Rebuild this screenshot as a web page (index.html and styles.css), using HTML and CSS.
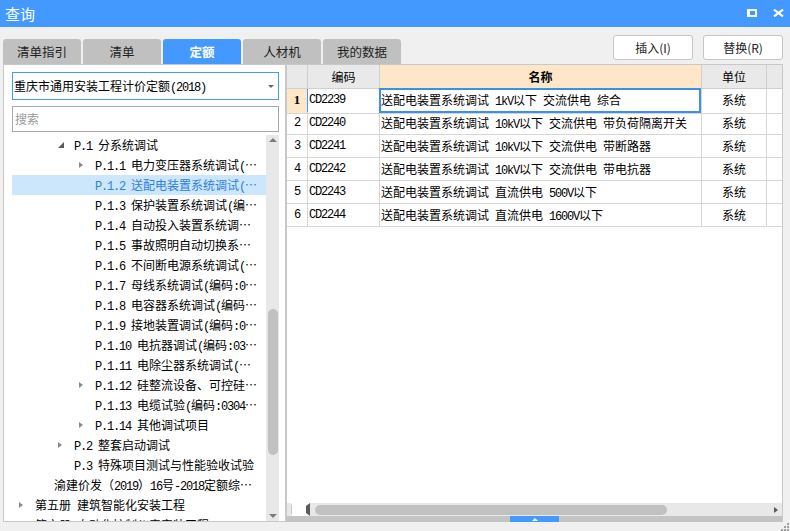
FILE: index.html
```html
<!DOCTYPE html>
<html lang="zh-CN">
<head>
<meta charset="utf-8">
<title>查询</title>
<link rel="stylesheet" href="styles.css">
</head>
<body>
<div class="win">
  <header class="titlebar">
    <span class="title">查询</span>
    <div class="winbtns">
      <span class="maxbtn"></span>
      <svg class="closebtn" width="11" height="8" viewBox="0 0 11 8"><path d="M1 0.6 L10 7.4 M10 0.6 L1 7.4" stroke="#fff" stroke-width="2.1" fill="none"/></svg>
    </div>
  </header>

  <div class="toolbar">
    <nav class="tabs">
      <div class="tab">清单指引</div>
      <div class="tab">清单</div>
      <div class="tab active">定额</div>
      <div class="tab">人材机</div>
      <div class="tab">我的数据</div>
    </nav>
    <div class="actions">
      <button class="btn">插入(I)</button>
      <button class="btn">替换(R)</button>
    </div>
  </div>

  <div class="main">
    <aside class="left">
      <div class="select"><span>重庆市通用安装工程计价定额<span class="m">(2018)</span></span><span class="caret"></span></div>
      <div class="search">搜索</div>
      <div class="tree">
        <ul class="nodes">
          <li class="node l2"><i class="tg open"></i><span class="m">P.1 </span>分系统调试</li>
          <li class="node l3"><i class="tg closed"></i><span class="m">P.1.1 </span>电力变压器系统调试<span class="m">(</span>⋯</li>
          <li class="node l3 sel"><i class="tg"></i><span class="m">P.1.2 </span>送配电装置系统调试<span class="m">(</span>⋯</li>
          <li class="node l3"><i class="tg"></i><span class="m">P.1.3 </span>保护装置系统调试<span class="m">(</span>编⋯</li>
          <li class="node l3"><i class="tg"></i><span class="m">P.1.4 </span>自动投入装置系统调⋯</li>
          <li class="node l3"><i class="tg"></i><span class="m">P.1.5 </span>事故照明自动切换系⋯</li>
          <li class="node l3"><i class="tg"></i><span class="m">P.1.6 </span>不间断电源系统调试<span class="m">(</span>⋯</li>
          <li class="node l3"><i class="tg"></i><span class="m">P.1.7 </span>母线系统调试<span class="m">(</span>编码<span class="m">:0</span>⋯</li>
          <li class="node l3"><i class="tg"></i><span class="m">P.1.8 </span>电容器系统调试<span class="m">(</span>编码⋯</li>
          <li class="node l3"><i class="tg"></i><span class="m">P.1.9 </span>接地装置调试<span class="m">(</span>编码<span class="m">:0</span>⋯</li>
          <li class="node l3"><i class="tg"></i><span class="m">P.1.10 </span>电抗器调试<span class="m">(</span>编码<span class="m">:03</span>⋯</li>
          <li class="node l3"><i class="tg"></i><span class="m">P.1.11 </span>电除尘器系统调试<span class="m">(</span>⋯</li>
          <li class="node l3"><i class="tg closed"></i><span class="m">P.1.12 </span>硅整流设备、可控硅⋯</li>
          <li class="node l3"><i class="tg"></i><span class="m">P.1.13 </span>电缆试验<span class="m">(</span>编码<span class="m">:0304</span>⋯</li>
          <li class="node l3"><i class="tg closed"></i><span class="m">P.1.14 </span>其他调试项目</li>
          <li class="node l2"><i class="tg closed"></i><span class="m">P.2 </span>整套启动调试</li>
          <li class="node l2"><i class="tg"></i><span class="m">P.3 </span>特殊项目测试与性能验收试验</li>
          <li class="node l1"><i class="tg"></i>渝建价发（<span class="m">2019</span>）<span class="m">16</span>号<span class="m">-2018</span>定额综⋯</li>
          <li class="node l0"><i class="tg closed"></i>第五册<span class="m"> </span>建筑智能化安装工程</li>
          <li class="node l0"><i class="tg closed"></i>第六册<span class="m"> </span>自动化控制仪表安装工程</li>
        </ul>
        <div class="vscroll">
          <span class="arr up"></span>
          <div class="vtrack"><span class="vthumb"></span></div>
          <span class="arr down"></span>
        </div>
      </div>
    </aside>

    <section class="right">
      <div class="grid">
        <div class="row hrow">
          <div class="c"></div>
          <div class="c">编码</div>
          <div class="c hsel">名称</div>
          <div class="c">单位</div>
          <div class="c"></div>
        </div>
        <div class="row cur">
          <div class="c num">1</div>
          <div class="c code m">CD2239</div>
          <div class="c name selcell">送配电装置系统调试<span class="m"> 1kV</span>以下<span class="m"> </span>交流供电<span class="m"> </span>综合</div>
          <div class="c unit">系统</div>
          <div class="c"></div>
        </div>
        <div class="row">
          <div class="c num m">2</div>
          <div class="c code m">CD2240</div>
          <div class="c name">送配电装置系统调试<span class="m"> 10kV</span>以下<span class="m"> </span>交流供电<span class="m"> </span>带负荷隔离开关</div>
          <div class="c unit">系统</div>
          <div class="c"></div>
        </div>
        <div class="row">
          <div class="c num m">3</div>
          <div class="c code m">CD2241</div>
          <div class="c name">送配电装置系统调试<span class="m"> 10kV</span>以下<span class="m"> </span>交流供电<span class="m"> </span>带断路器</div>
          <div class="c unit">系统</div>
          <div class="c"></div>
        </div>
        <div class="row">
          <div class="c num m">4</div>
          <div class="c code m">CD2242</div>
          <div class="c name">送配电装置系统调试<span class="m"> 10kV</span>以下<span class="m"> </span>交流供电<span class="m"> </span>带电抗器</div>
          <div class="c unit">系统</div>
          <div class="c"></div>
        </div>
        <div class="row">
          <div class="c num m">5</div>
          <div class="c code m">CD2243</div>
          <div class="c name">送配电装置系统调试<span class="m"> </span>直流供电<span class="m"> 500V</span>以下</div>
          <div class="c unit">系统</div>
          <div class="c"></div>
        </div>
        <div class="row">
          <div class="c num m">6</div>
          <div class="c code m">CD2244</div>
          <div class="c name">送配电装置系统调试<span class="m"> </span>直流供电<span class="m"> 1600V</span>以下</div>
          <div class="c unit">系统</div>
          <div class="c"></div>
        </div>
      </div>
      <div class="hscroll">
        <span class="harr left"></span>
        <div class="htrack"><span class="hthumb"></span></div>
        <span class="harr rightarr"></span>
      </div>
      <div class="splitter"><span class="handle"><span class="uptri"></span></span></div>
    </section>
  </div>

  <footer class="status">
    <svg width="9" height="9" viewBox="0 0 9 9"><g fill="#a0a0a0"><rect x="7" y="1" width="2" height="2"/><rect x="4" y="4" width="2" height="2"/><rect x="7" y="4" width="2" height="2"/><rect x="1" y="7" width="2" height="2"/><rect x="4" y="7" width="2" height="2"/><rect x="7" y="7" width="2" height="2"/></g></svg>
  </footer>
</div>
</body>
</html>
```

FILE: styles.css
```css
* { box-sizing: border-box; margin: 0; padding: 0; }
html, body { width: 790px; height: 531px; overflow: hidden; }
body {
  background: #f0f0f0;
  font-family: "Noto Sans CJK SC", "Liberation Sans", sans-serif;
  font-size: 12px;
  color: #000;
}
.win { width: 790px; height: 531px; display: flex; flex-direction: column; }

.m { font-family: "Liberation Mono", "Noto Sans CJK SC", monospace; letter-spacing: -1.2px; white-space: pre; }

/* title bar */
.titlebar {
  height: 27px; flex: none;
  background: #4499fe; color: #fff;
  display: flex; align-items: center;
  padding: 0 6px 0 5px;
}
.title { font-size: 15px; line-height: 27px; }
.winbtns { margin-left: auto; display: flex; align-items: center; gap: 16px; margin-top: -1px; }
.maxbtn { display: block; width: 10px; height: 8px; border: 2px solid #fff; border-left-width: 3px; }
.closebtn { display: block; }

/* toolbar */
.toolbar { height: 37px; flex: none; display: flex; padding: 0 7px 0 3px; }
.tabs { display: flex; gap: 2px; margin-top: 12px; }
.tab {
  width: 78px; height: 25px;
  background: #c0c0c0; color: #1e1e1e;
  border-radius: 3px 3px 0 0;
  text-align: center; line-height: 25px; font-size: 12.5px;
}
.tab.active { background: #4499fe; color: #fff; font-weight: bold; }
.actions { margin-left: auto; display: flex; gap: 10px; margin-top: 8px; align-items: flex-start; }
.btn {
  width: 80px; height: 25px;
  background: #fff; border: 1px solid #c6c6c6; border-radius: 3px;
  font-family: inherit; font-size: 12px; color: #222;
}

/* main */
.main { display: flex; height: 458px; flex: none; margin-left: 3px; width: 780px; }

.left {
  width: 283px; flex: none;
  background: #fff;
  border: 1px solid #c8c8c8;
  padding: 7px 6px 0 8px;
  display: flex; flex-direction: column;
}
.select {
  height: 28px; flex: none;
  border: 1px solid #4499fe;
  display: flex; align-items: center;
  padding: 0 4px 0 1px;
  white-space: nowrap;
}
.caret {
  margin-left: auto;
  width: 0; height: 0;
  border-top: 3px solid #6a6a6a;
  border-left: 3px solid transparent;
  border-right: 3px solid transparent;
}
.search {
  height: 26px; flex: none; margin-top: 6px;
  border: 1px solid #a8a8a8;
  color: #9a9a9a;
  padding-left: 2px; line-height: 24px;
}
.tree { height: 386px; flex: none; margin-top: 3px; display: flex; }
.nodes { list-style: none; width: 254px; flex: none; overflow: hidden; }
.node {
  display: block;
  height: 20px; line-height: 20px;
  white-space: nowrap; overflow: hidden;
}
.node.l0 { padding-left: 7px; }
.node.l1 { padding-left: 26px; }
.node.l2 { padding-left: 46px; }
.node.l3 { padding-left: 67px; }
.node.sel { background: #cce6fc; color: #2f7fe0; }
.tg { display: inline-block; width: 16px; height: 20px; vertical-align: top; position: relative; }
.tg.closed::before {
  content: ""; position: absolute; left: 0; top: 7px;
  border-left: 4px solid #8a8a8a;
  border-top: 3.5px solid transparent;
  border-bottom: 3.5px solid transparent;
}
.tg.open::before {
  content: ""; position: absolute; left: 0; top: 7px;
  border-bottom: 6px solid #5a5a5a;
  border-left: 6px solid transparent;
}

.vscroll { width: 13px; flex: none; background: #e8e8e8; display: flex; flex-direction: column; align-items: center; }
.arr { width: 0; height: 0; flex: none; border-left: 4.5px solid transparent; border-right: 4.5px solid transparent; }
.arr.up { border-bottom: 4px solid #7c7c7c; margin-top: 3px; }
.arr.down { border-top: 4px solid #7c7c7c; margin-bottom: 3px; margin-top: 4px; }
.vtrack { flex: 1; width: 100%; display: flex; justify-content: center; }
.vthumb { display: block; width: 10px; height: 146px; margin-top: 167px; background: #c1c1c1; border-radius: 5px; }

/* right */
.right {
  width: 497px; flex: none;
  background: #fff;
  border: 1px solid #c8c8c8; border-bottom: 0;
  display: flex; flex-direction: column;
}
.grid { flex: 1; overflow: hidden; }
.row { display: grid; grid-template-columns: 21px 72px 322px 65px 15px; height: 23px; }
.c {
  border-right: 1px solid #d6d6d6; border-bottom: 1px solid #d6d6d6;
  line-height: 22px; white-space: nowrap; overflow: hidden;
}
.c:last-child { border-right: 0; }
.hrow { height: 24px; }
.hrow .c { background: #e9e9e9; text-align: center; line-height: 23px; border-color: #cfcfcf; }
.hrow .c.hsel { background: #fde7c8; font-weight: bold; }
.num { text-align: center; }
.cur .num { background: #fde7c8; font-weight: bold; font-family: "Liberation Serif", serif; font-size: 13px; border-right: 1px solid #4499fe; }
.code { padding-left: 1px; }
.name { padding-left: 1px; }
.unit { text-align: center; }
.selcell { position: relative; overflow: visible; }
.selcell::after {
  content: ""; position: absolute;
  top: -1px; left: -1px; right: 0; bottom: 0;
  border: 2px solid #3d8fea;
}

.hscroll { height: 13px; flex: none; background: #e8e8e8; display: flex; align-items: center; }
.harr { width: 0; height: 0; flex: none; border-top: 3.5px solid transparent; border-bottom: 3.5px solid transparent; }
.harr.left { border-right: 4px solid #5a5a5a; margin-left: 4px; margin-right: 5px; }
.harr.rightarr { border-left: 4px solid #5a5a5a; margin-right: 4px; margin-left: 5px; }
.htrack { flex: 1; display: flex; }
.hthumb { display: block; width: 352px; height: 10px; background: #c1c1c1; border-radius: 5px; }

.splitter { height: 6px; flex: none; background: #c4c4c4; display: flex; justify-content: center; }
.handle { width: 49px; height: 6px; background: #4499fe; display: flex; justify-content: center; align-items: center; }
.uptri { width: 0; height: 0; border-bottom: 3px solid #fff; border-left: 3px solid transparent; border-right: 3px solid transparent; }

.status { height: 9px; flex: none; display: flex; justify-content: flex-end; align-items: flex-end; padding-right: 1px; }
.status svg { display: block; }
```
